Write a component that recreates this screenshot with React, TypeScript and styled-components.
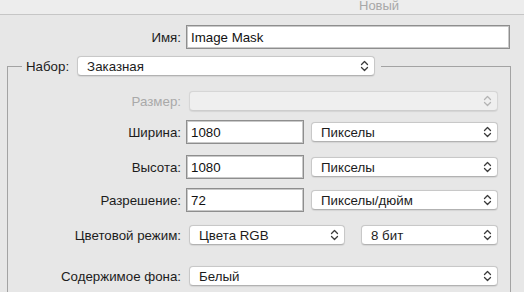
import React from "react";
import styled, { createGlobalStyle } from "styled-components";

const Global = createGlobalStyle`
  html, body { margin: 0; padding: 0; }
  body {
    background: #e7e7e7;
    font-family: "Liberation Sans", Arial, Helvetica, sans-serif;
    font-size: 13.3px;
    color: #1c1c1c;
  }
`;

const Window = styled.div`
  width: 524px;
  height: 292px;
  overflow: hidden;
  background: #e7e7e7;
`;

const TitleBar = styled.div`
  box-sizing: border-box;
  height: 15px;
  background: #ededed;
  border-bottom: 1px solid #c6c6c6;
  padding: 1px 0 0 359px;
`;

const Title = styled.div`
  font-size: 13px;
  line-height: 10px;
  color: #a8a8a8;
`;

const Content = styled.div`
  padding-top: 10px;
`;

const Row = styled.div<{ $mt?: number }>`
  display: flex;
  align-items: center;
  height: 24px;
  margin-top: ${(p) => p.$mt ?? 0}px;
`;

const Label = styled.div<{ $w: number; $disabled?: boolean }>`
  width: ${(p) => p.$w}px;
  flex: none;
  text-align: right;
  white-space: nowrap;
  color: ${(p) => (p.$disabled ? "#a9a9a9" : "#1c1c1c")};
`;

const Field = styled.div<{ $w: number; $ml?: number }>`
  box-sizing: border-box;
  width: ${(p) => p.$w}px;
  height: 24px;
  margin-left: ${(p) => p.$ml ?? 5}px;
  flex: none;
  background: #ffffff;
  border: 1px solid #8e8e8e;
  box-shadow: inset 0 0 0 1px #c9c9c9;
  display: flex;
  align-items: center;
  padding-left: 4px;
  color: #111;
`;

const Popup = styled.div<{ $w: number; $ml?: number; $disabled?: boolean }>`
  box-sizing: border-box;
  width: ${(p) => p.$w}px;
  height: 20px;
  margin-left: ${(p) => p.$ml ?? 0}px;
  flex: none;
  display: flex;
  align-items: center;
  justify-content: space-between;
  padding: 0 5px 0 9px;
  border-radius: 4px;
  background: ${(p) => (p.$disabled ? "#efefef" : "#ffffff")};
  border: 1px solid ${(p) => (p.$disabled ? "#d6d6d6" : "#c8c8c8")};
  border-bottom-color: ${(p) => (p.$disabled ? "#cdcdcd" : "#b2b2b2")};
  box-shadow: 0 0.5px 1px rgba(0, 0, 0, 0.08);
  color: ${(p) => (p.$disabled ? "#a9a9a9" : "#1c1c1c")};
`;

const PopupText = styled.span`
  white-space: nowrap;
`;

const GroupBox = styled.fieldset`
  box-sizing: border-box;
  margin: 7px 0 0 7px;
  width: 504px;
  height: 300px;
  padding: 0;
  border: 1px solid #a3a3a3;
`;

const Legend = styled.legend`
  margin-left: 14px;
  padding: 0 6px 0 4px;
  display: flex;
  align-items: center;
  height: 20px;
`;

const LegendLabel = styled.span`
  margin-right: 8px;
`;

const Chevron = ({ color = "#3a3a3a" }: { color?: string }) => (
  <svg width="9" height="12" viewBox="0 0 9 12" fill="none">
    <path d="M1.5 4.5 L4.5 1.5 L7.5 4.5" stroke={color} strokeWidth="1.3" strokeLinecap="round" strokeLinejoin="round" />
    <path d="M1.5 7.5 L4.5 10.5 L7.5 7.5" stroke={color} strokeWidth="1.3" strokeLinecap="round" strokeLinejoin="round" />
  </svg>
);

export default function App() {
  return (
    <>
      <Global />
      <Window>
        <TitleBar>
          <Title>Новый</Title>
        </TitleBar>
        <Content>
          <Row>
            <Label $w={181}>Имя:</Label>
            <Field $w={324}>Image Mask</Field>
          </Row>
          <GroupBox>
            <Legend>
              <LegendLabel>Набор:</LegendLabel>
              <Popup $w={298}>
                <PopupText>Заказная</PopupText>
                <Chevron />
              </Popup>
            </Legend>
            <Row $mt={13}>
              <Label $w={173} $disabled>Размер:</Label>
              <Popup $w={309} $ml={8} $disabled>
                <PopupText />
                <Chevron color="#b4b4b4" />
              </Popup>
            </Row>
            <Row $mt={7}>
              <Label $w={173}>Ширина:</Label>
              <Field $w={118}>1080</Field>
              <Popup $w={187} $ml={7}>
                <PopupText>Пикселы</PopupText>
                <Chevron />
              </Popup>
            </Row>
            <Row $mt={11}>
              <Label $w={173}>Высота:</Label>
              <Field $w={118}>1080</Field>
              <Popup $w={187} $ml={7}>
                <PopupText>Пикселы</PopupText>
                <Chevron />
              </Popup>
            </Row>
            <Row $mt={9}>
              <Label $w={173}>Разрешение:</Label>
              <Field $w={118}>72</Field>
              <Popup $w={187} $ml={7}>
                <PopupText>Пикселы/дюйм</PopupText>
                <Chevron />
              </Popup>
            </Row>
            <Row $mt={11}>
              <Label $w={173}>Цветовой режим:</Label>
              <Popup $w={156} $ml={8}>
                <PopupText>Цвета RGB</PopupText>
                <Chevron />
              </Popup>
              <Popup $w={137} $ml={16}>
                <PopupText>8 бит</PopupText>
                <Chevron />
              </Popup>
            </Row>
            <Row $mt={17}>
              <Label $w={173}>Содержимое фона:</Label>
              <Popup $w={309} $ml={8}>
                <PopupText>Белый</PopupText>
                <Chevron />
              </Popup>
            </Row>
          </GroupBox>
        </Content>
      </Window>
    </>
  );
}
